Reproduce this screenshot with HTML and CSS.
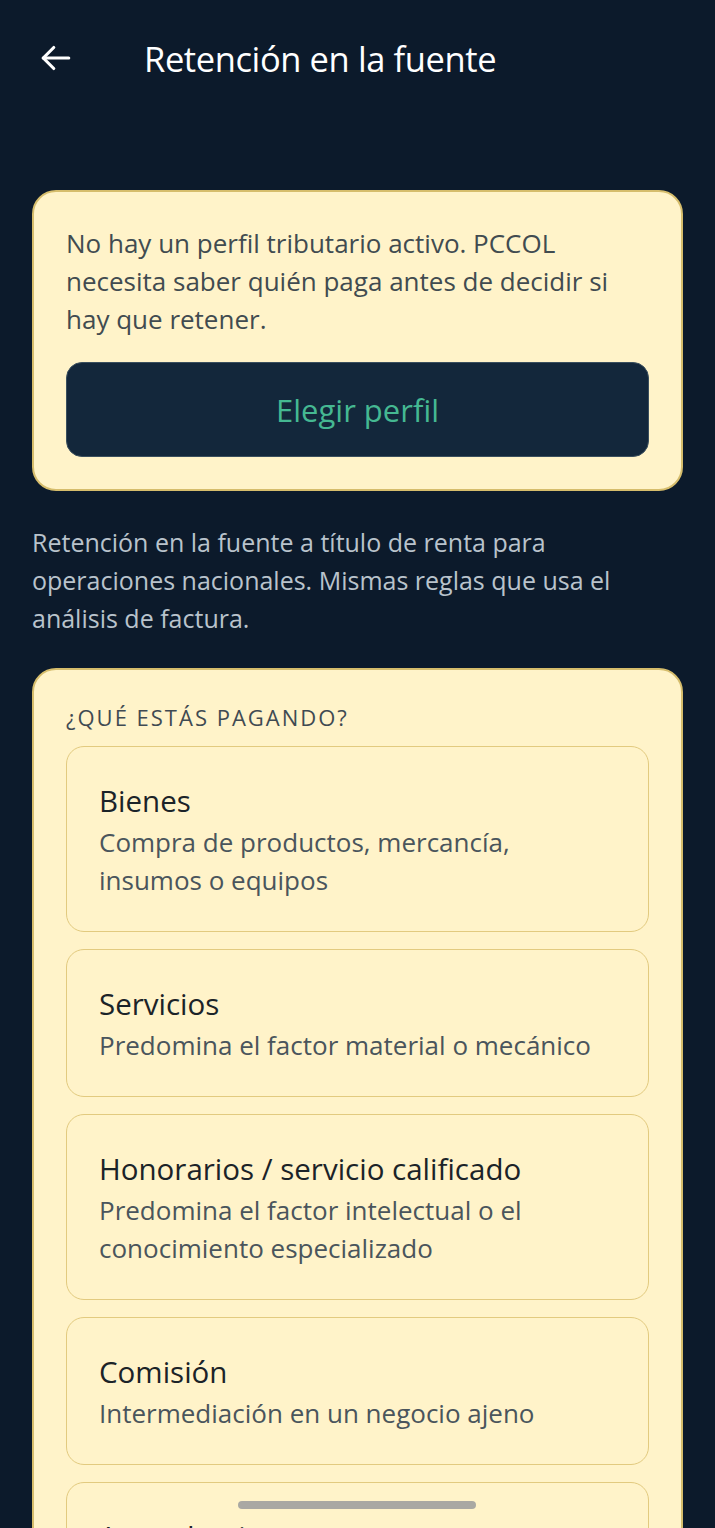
FILE: index.html
```html
<!DOCTYPE html>
<html lang="es">
<head>
    <meta charset="UTF-8">
    <meta name="viewport" content="width=device-width, initial-scale=1.0">
    <title>Retención en la fuente</title>
    <link rel="stylesheet" href="styles.css">
</head>
<body>
    <header class="topbar">
        <button class="back-button" aria-label="Volver">
            <svg width="36" height="36" viewBox="0 0 24 24" fill="none" stroke="#ffffff" stroke-width="2.1" stroke-linecap="round" stroke-linejoin="round">
                <path d="M20.5 12H3.5"></path>
                <path d="M10.5 5l-7 7 7 7"></path>
            </svg>
        </button>
        <h1 class="title">Retención en la fuente</h1>
    </header>

    <main class="content">
        <section class="card notice">
            <p class="notice-text">No hay un perfil tributario activo. PCCOL necesita saber quién paga antes de decidir si hay que retener.</p>
            <button class="profile-button">Elegir perfil</button>
        </section>

        <p class="intro">Retención en la fuente a título de renta para operaciones nacionales. Mismas reglas que usa el análisis de factura.</p>

        <section class="card options">
            <h2 class="section-label">¿Qué estás pagando?</h2>

            <div class="option">
                <div class="option-title">Bienes</div>
                <div class="option-desc">Compra de productos, mercancía, insumos o equipos</div>
            </div>

            <div class="option">
                <div class="option-title">Servicios</div>
                <div class="option-desc">Predomina el factor material o mecánico</div>
            </div>

            <div class="option">
                <div class="option-title">Honorarios / servicio calificado</div>
                <div class="option-desc">Predomina el factor intelectual o el conocimiento especializado</div>
            </div>

            <div class="option">
                <div class="option-title">Comisión</div>
                <div class="option-desc">Intermediación en un negocio ajeno</div>
            </div>

            <div class="option">
                <div class="option-title">Arrendamientos</div>
                <div class="option-desc">Alquiler de bienes muebles o inmuebles</div>
            </div>
        </section>
    </main>

    <div class="home-indicator"></div>
</body>
</html>
```

FILE: styles.css
```css
html,
body {
    height: 1528px;
}

body {
    font-family: 'Open Sans', 'Noto Sans', sans-serif;
    margin: 0;
    padding: 0;
    background-color: #0c1a2b;
    overflow: hidden;
    position: relative;
}

.topbar {
    display: flex;
    align-items: center;
    height: 116px;
    padding: 0 0 0 38px;
}

.back-button {
    background: none;
    border: none;
    padding: 0;
    width: 36px;
    height: 36px;
    display: flex;
    align-items: center;
    justify-content: center;
    margin-right: 70px;
}

.title {
    margin: 0;
    font-size: 34.5px;
    font-weight: 400;
    color: #ffffff;
    letter-spacing: -0.4px;
}

.content {
    padding: 74px 32px 0;
}

.card {
    background-color: #fff3c9;
    border: 2px solid #d6bd6c;
    border-radius: 24px;
    box-sizing: border-box;
}

.notice {
    padding: 32px 32px 32px;
}

.notice-text {
    margin: 0 0 24px;
    font-size: 26px;
    line-height: 38px;
    color: #414b50;
}

.profile-button {
    display: block;
    width: 100%;
    height: 95px;
    background-color: #13273b;
    border: 1.5px solid #3a4f5e;
    border-radius: 16px;
    color: #45b892;
    font-family: inherit;
    font-size: 31px;
    font-weight: 500;
}

.intro {
    margin: 32px 0 31px;
    font-size: 25px;
    line-height: 38px;
    color: #b9c3cc;
}

.options {
    padding: 34px 32px 40px;
}

.section-label {
    margin: 0 0 16px 0;
    font-size: 22px;
    font-weight: 500;
    letter-spacing: 2px;
    text-transform: uppercase;
    color: #3f4a52;
    line-height: 26px;
}

.option {
    border: 1.5px solid #e2ca7f;
    border-radius: 18px;
    padding: 35px 40px 32px 32px;
    margin-bottom: 17px;
}

.option-title {
    font-size: 29.5px;
    font-weight: 500;
    line-height: 38px;
    margin-bottom: 3px;
    color: #1b2328;
}

.option-desc {
    font-size: 26px;
    line-height: 38px;
    color: #4a555c;
}

.home-indicator {
    position: absolute;
    left: 238px;
    top: 1501px;
    width: 238px;
    height: 8px;
    border-radius: 4px;
    background-color: #a9a8a3;
}
```
